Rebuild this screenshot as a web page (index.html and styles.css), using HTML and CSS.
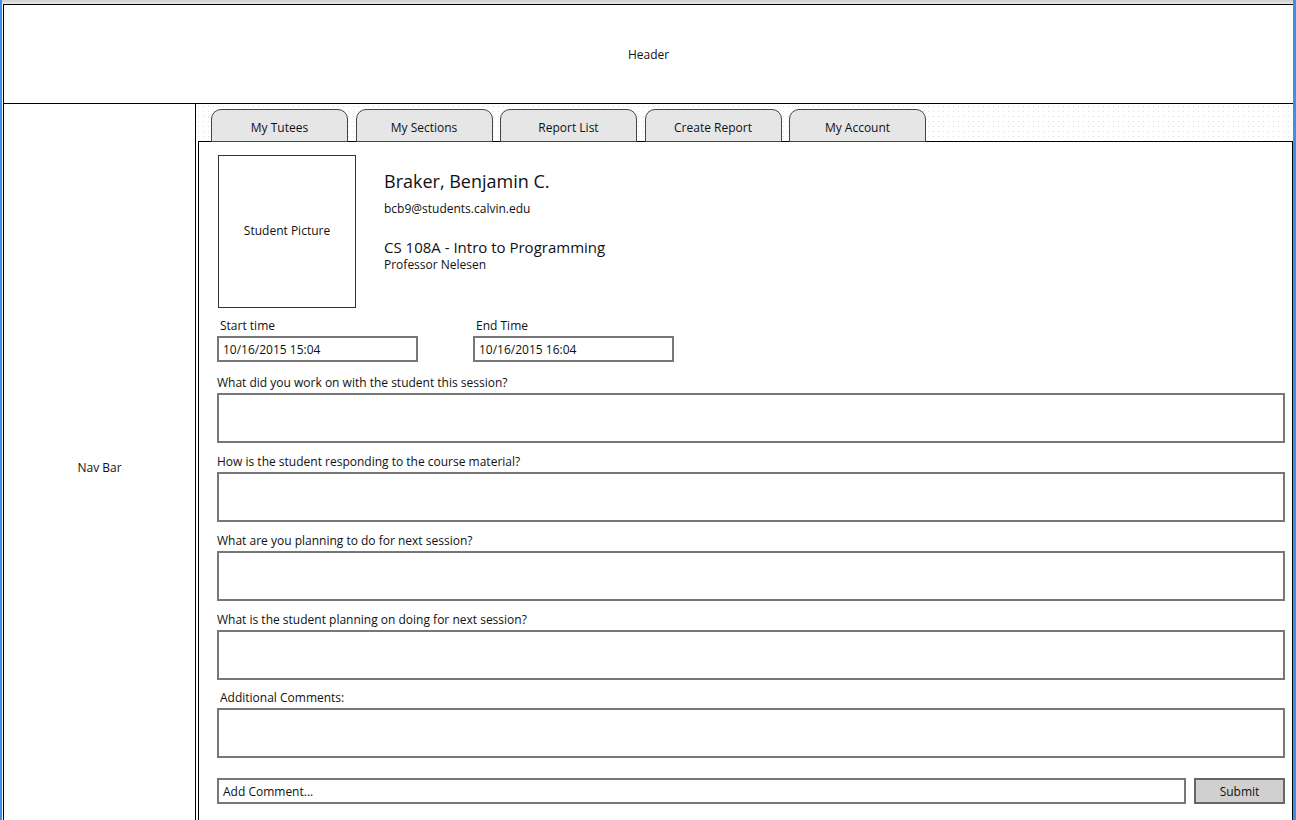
FILE: index.html
```html
<!DOCTYPE html>
<html>
<head>
<meta charset="utf-8">
<link rel="stylesheet" href="styles.css">
</head>
<body>
<div class="frame">
  <div class="topbar"></div>
  <div class="header">Header</div>
  <div class="body-row">
    <div class="nav">Nav Bar</div>
    <div class="main">
      <div class="tabstrip">
        <div class="tab">My Tutees</div>
        <div class="tab">My Sections</div>
        <div class="tab">Report List</div>
        <div class="tab">Create Report</div>
        <div class="tab">My Account</div>
      </div>
      <div class="panel">
        <div class="profile">
          <div class="picture">Student Picture</div>
          <div class="info">
            <div class="name">Braker, Benjamin C.</div>
            <div class="email">bcb9@students.calvin.edu</div>
            <div class="course">CS 108A - Intro to Programming</div>
            <div class="prof">Professor Nelesen</div>
          </div>
        </div>
        <div class="times">
          <div class="timefield">
            <div class="label">Start time</div>
            <div class="input">10/16/2015 15:04</div>
          </div>
          <div class="timefield">
            <div class="label">End Time</div>
            <div class="input">10/16/2015 16:04</div>
          </div>
        </div>
        <div class="field f1">
          <div class="label">What did you work on with the student this session?</div>
          <div class="area"></div>
        </div>
        <div class="field">
          <div class="label">How is the student responding to the course material?</div>
          <div class="area"></div>
        </div>
        <div class="field">
          <div class="label">What are you planning to do for next session?</div>
          <div class="area"></div>
        </div>
        <div class="field">
          <div class="label">What is the student planning on doing for next session?</div>
          <div class="area"></div>
        </div>
        <div class="field last">
          <div class="label indent">Additional Comments:</div>
          <div class="area"></div>
        </div>
        <div class="comment-row">
          <div class="input comment">Add Comment...</div>
          <div class="submit">Submit</div>
        </div>
      </div>
    </div>
  </div>
</div>
</body>
</html>
```

FILE: styles.css
```css
html, body {
  margin: 0;
  padding: 0;
  background: #ffffff;
}

.frame {
  width: 1296px;
  height: 820px;
  overflow: hidden;
  box-sizing: border-box;
  border-left: 2px solid #3d8fe8;
  border-right: 3px solid #3d8fe8;
  display: flex;
  flex-direction: column;
  font-family: "Open Sans", "DejaVu Sans", sans-serif;
  color: #111;
}

.topbar {
  height: 4px;
  background: linear-gradient(#cfcfcf, #e8e8e8);
  flex: none;
}

.header {
  height: 100px;
  box-sizing: border-box;
  margin-left: 1px;
  border: 1px solid #000;
  border-right: none;
  display: flex;
  align-items: center;
  justify-content: center;
  font-size: 12px;
  flex: none;
}

.body-row {
  display: flex;
  flex: 1;
  min-height: 0;
}

.nav {
  width: 193px;
  box-sizing: border-box;
  margin-left: 1px;
  border-left: 1px solid #000;
  border-right: 1px solid #000;
  display: flex;
  align-items: center;
  justify-content: center;
  font-size: 12px;
  padding-top: 10px;
  flex: none;
}

.main {
  flex: 1;
  display: flex;
  flex-direction: column;
  padding-left: 2px;
  background-color: #fff;
  background-image:
    radial-gradient(circle, #dcdcdc 0.6px, transparent 0.8px);
  background-size: 5px 5px;
}

.tabstrip {
  height: 38px;
  display: flex;
  align-items: flex-end;
  gap: 8px;
  padding-left: 13px;
  margin-bottom: -1px;
  position: relative;
  z-index: 1;
  flex: none;
}

.tab {
  width: 137px;
  height: 33px;
  box-sizing: border-box;
  border: 1px solid #444;
  border-radius: 10px 10px 0 0;
  background: #e6e6e6;
  display: flex;
  align-items: center;
  justify-content: center;
  font-size: 12px;
  padding-top: 3px;
}

.tab + .tab {
  margin-left: -0.5px;
}

.panel {
  flex: 1;
  background: #fff;
  border-top: 1px solid #000;
  border-left: 1px solid #000;
  border-right: 1px solid #000;
  padding: 12px 7px 0 18px;
  font-size: 12px;
}

.profile {
  display: flex;
  gap: 27px;
}

.picture {
  width: 138px;
  height: 153px;
  box-sizing: border-box;
  margin: 1px 0 0 1px;
  border: 1px solid #333;
  display: flex;
  align-items: center;
  justify-content: center;
  font-size: 12px;
  padding-bottom: 2px;
}

.info {
  padding-top: 16px;
  margin-left: 1px;
}

.name {
  font-size: 18px;
  line-height: 22px;
}

.email {
  font-size: 12px;
  line-height: 16px;
  margin-top: 9px;
}

.course {
  font-size: 15px;
  line-height: 20px;
  margin-top: 20px;
}

.prof {
  font-size: 12px;
  line-height: 16px;
  margin-top: 0px;
}

.times {
  display: flex;
  gap: 55px;
  margin-top: 11px;
}

.timefield {
  width: 201px;
}

.timefield .label {
  padding-left: 3px;
}

.label {
  font-size: 12px;
  line-height: 14px;
  margin-bottom: 3px;
}

.label.indent {
  padding-left: 3px;
}

.input {
  height: 26px;
  box-sizing: border-box;
  border: 2px solid #777;
  display: flex;
  align-items: center;
  padding-left: 4px;
  font-size: 12px;
}

.field {
  margin-top: 12px;
}

.field.f1 {
  margin-top: 14px;
}

.field.last {
  margin-top: 11px;
}

.area {
  height: 50px;
  box-sizing: border-box;
  border: 2px solid #777;
}

.comment-row {
  display: flex;
  gap: 8px;
  margin-top: 20px;
}

.comment {
  flex: 1;
}

.submit {
  width: 91px;
  height: 26px;
  box-sizing: border-box;
  border: 2px solid #666;
  background: #d0d0d0;
  display: flex;
  align-items: center;
  justify-content: center;
  font-size: 12px;
}
```
